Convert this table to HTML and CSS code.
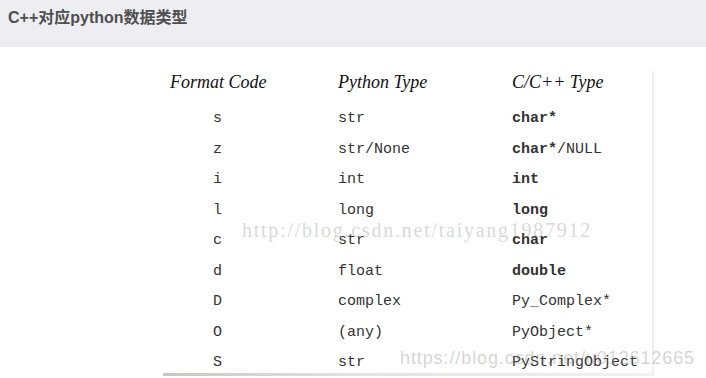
FILE: index.html
```html
<!DOCTYPE html>
<html lang="zh-CN">
<head>
    <meta charset="UTF-8">
    <meta name="viewport" content="width=device-width, initial-scale=1.0">
    <title>C++对应python数据类型</title>
    <link rel="stylesheet" href="styles.css">
</head>
<body>

    <div class="titleBar">
        <h3>C++对应python数据类型</h3>
    </div>

    <div class="figure">
        <div class="typeTable">
            <div class="head code">Format Code</div>
            <div class="head">Python Type</div>
            <div class="head">C/C++ Type</div>

            <div class="cell code">s</div>
            <div class="cell">str</div>
            <div class="cell"><b>char*</b></div>

            <div class="cell code">z</div>
            <div class="cell">str/None</div>
            <div class="cell"><b>char*</b>/NULL</div>

            <div class="cell code">i</div>
            <div class="cell">int</div>
            <div class="cell"><b>int</b></div>

            <div class="cell code">l</div>
            <div class="cell">long</div>
            <div class="cell"><b>long</b></div>

            <div class="cell code">c</div>
            <div class="cell">str</div>
            <div class="cell"><b>char</b></div>

            <div class="cell code">d</div>
            <div class="cell">float</div>
            <div class="cell"><b>double</b></div>

            <div class="cell code">D</div>
            <div class="cell">complex</div>
            <div class="cell">Py_Complex*</div>

            <div class="cell code">O</div>
            <div class="cell">(any)</div>
            <div class="cell">PyObject*</div>

            <div class="cell code">S</div>
            <div class="cell">str</div>
            <div class="cell">PyStringObject</div>
        </div>
        <div class="bottomBar"></div>

        <!-- watermarks over the picture -->
        <div class="markOld">http://blog.csdn.net/taiyang1987912</div>
        <div class="markNew">https://blog.csdn.net/u012612665</div>
    </div>

</body>
</html>
```

FILE: styles.css
```css
body {
    margin: 0;
    padding: 0;
    background-color: #fff;
    font-family: "Liberation Sans", "Noto Sans CJK SC", sans-serif;
}

.titleBar {
    height: 47px;
    background-color: #eeeef2;
    padding-left: 8px;
    box-sizing: border-box;
}

.titleBar h3 {
    margin: 0;
    padding-top: 7px;
    font-size: 16px;
    line-height: 22px;
    font-weight: bold;
    color: #4f4f4f;
    font-family: "Liberation Sans", "Noto Sans CJK SC", sans-serif;
}

.figure {
    position: relative;
    margin-top: 24px;
    margin-left: 163px;
    width: 489px;
    border-right: 2px solid #f0f0f0;
}

.typeTable {
    display: grid;
    grid-template-columns: 168px 174px 1fr;
    grid-template-rows: 33px;
    grid-auto-rows: 30.5px;
    height: 302px;
    overflow: hidden;
    padding-left: 7px;
}

.head {
    font-family: "Liberation Serif", serif;
    font-style: italic;
    font-size: 18px;
    line-height: 22px;
    color: #111;
    white-space: nowrap;
}

.cell {
    font-family: "Liberation Mono", monospace;
    font-size: 15px;
    line-height: 30.5px;
    color: #333;
}

.cell.code {
    width: 95px;
    text-align: center;
}

.bottomBar {
    height: 3px;
    background: linear-gradient(to right, #c9c7be, #e4e3dd 40%, #f1f1f1);
}

.markOld {
    position: absolute;
    left: 79px;
    top: 148px;
    font-family: "Liberation Serif", serif;
    font-size: 20px;
    letter-spacing: 1.75px;
    color: rgba(160, 160, 160, 0.42);
    white-space: nowrap;
}

.markNew {
    position: absolute;
    left: 237px;
    top: 277px;
    font-family: "Liberation Sans", sans-serif;
    font-size: 18px;
    letter-spacing: 0.9px;
    color: rgba(140, 140, 140, 0.38);
    white-space: nowrap;
}
```
